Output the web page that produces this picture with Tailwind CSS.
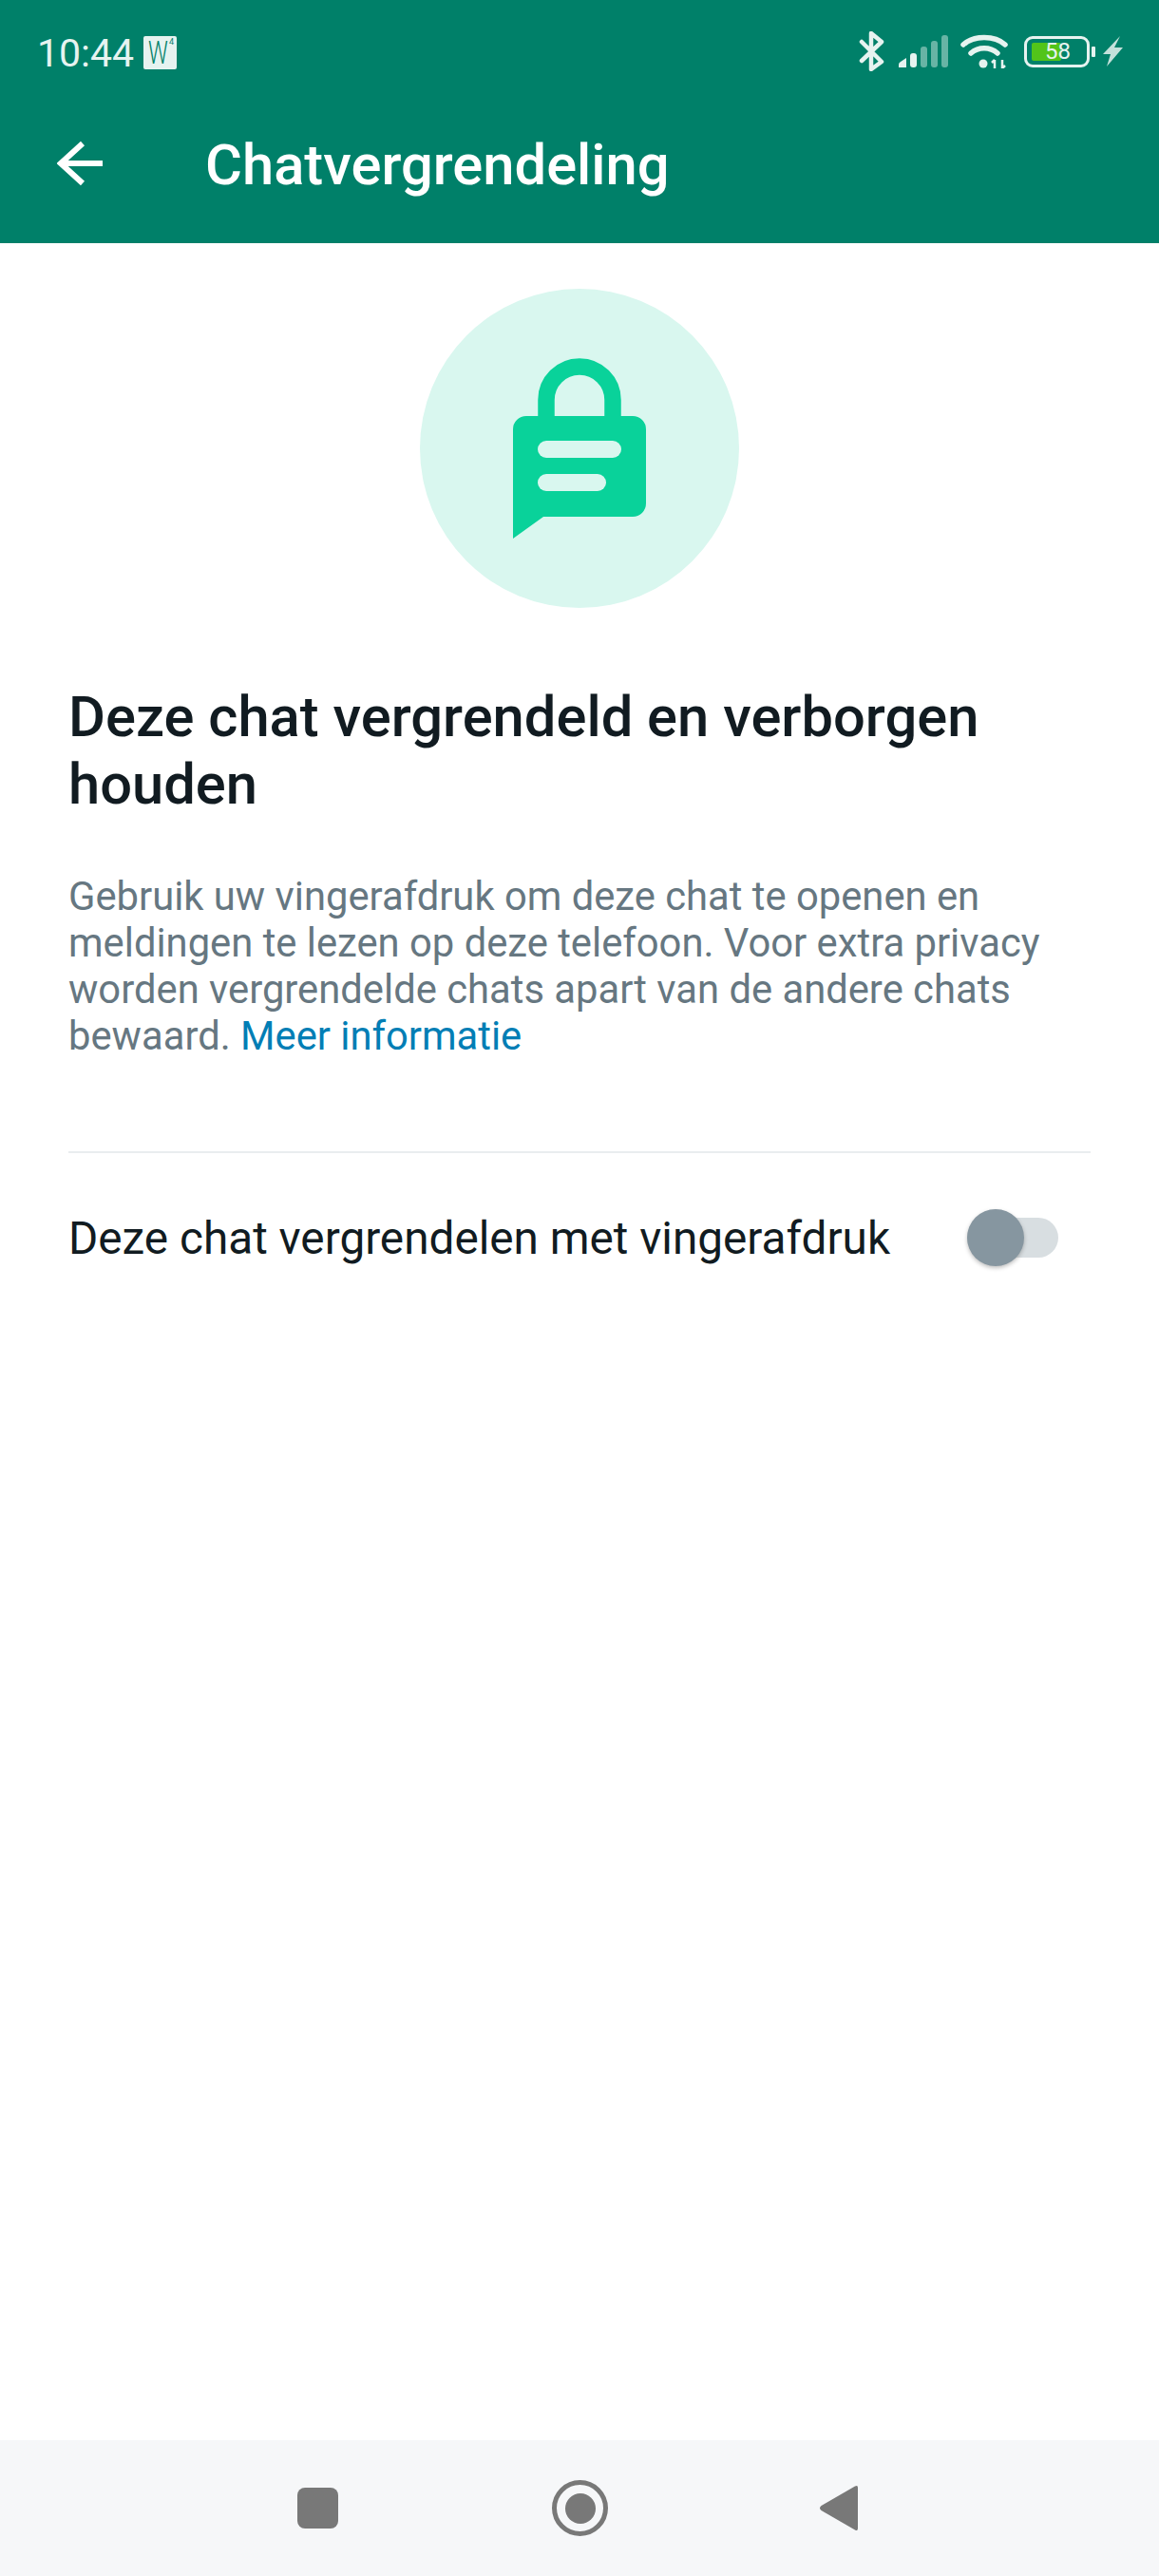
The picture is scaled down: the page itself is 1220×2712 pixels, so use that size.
<!DOCTYPE html>
<html lang="nl">
<head>
<meta charset="UTF-8">
<meta name="viewport" content="width=device-width, initial-scale=1.0">
<title>Chatvergrendeling</title>
<script src="https://cdn.jsdelivr.net/npm/@tailwindcss/browser@4"></script>
</head>
<body class="bg-white font-['Roboto',sans-serif]">
<div class="w-[1220px] h-[2712px] flex flex-col">
  <!-- Header -->
  <header class="h-[256px] bg-[#008069] flex flex-col text-white">
    <!-- Statusbalk -->
    <div class="h-[112px] flex items-start justify-between pl-[39px] pr-[38px] pt-[36px]">
      <div class="flex items-center gap-[10px]">
        <span class="text-[41px] leading-[40px] text-[#e6f3f0]">10:44</span>
        <div class="relative w-[35px] h-[35px] rounded-[2px] bg-[#e6f3f0] -mt-[2px] text-[#008069]">
          <span class="absolute left-[5px] top-[3px] text-[33px] leading-[30px] font-light origin-left scale-x-[0.7]">W</span>
          <span class="absolute right-[3px] top-[2px] text-[9px] leading-[9px]">4</span>
        </div>
      </div>
      <div class="flex items-center h-[42px] -mt-[3px]">
        <svg class="w-[27px] h-[42px]" viewBox="0 0 27 42" fill="none" stroke="#e6f3f0" stroke-width="4.500" stroke-linecap="round" stroke-linejoin="round"><path d="M3 11l21 21-11 8V2l11 9L3 31"/></svg>
        <svg class="w-[52px] h-[34px] ml-[15px]" viewBox="0 0 52 34" fill="#e6f3f0">
          <path d="M0 34v-3q0-2 2-3l6-4v10z"/>
          <rect x="12" y="19" width="7" height="15" rx="3"/>
          <rect x="23" y="12" width="7" height="22" rx="3" opacity=".45"/>
          <rect x="34" y="6" width="7" height="28" rx="3" opacity=".45"/>
          <rect x="45" y="0" width="7" height="34" rx="3" opacity=".45"/>
        </svg>
        <svg class="w-[50px] h-[36px] ml-[13px]" viewBox="0 0 50 36" fill="none" stroke="#e6f3f0" stroke-width="5.500" stroke-linecap="round">
          <path d="M3 11C14 1 36 1 47 11"/>
          <path d="M11 20c8-7 20-7 28 0"/>
          <circle cx="24" cy="31" r="4.500" fill="#e6f3f0" stroke="none"/>
          <path d="M36 36v-9m-3 3l3-3M44 27v9m3-3l-3 3" stroke-width="2.500" stroke-linecap="butt"/>
        </svg>
        <div class="relative ml-[17px] w-[69px] h-[33px] rounded-[9px] border-[3px] border-[#e6f3f0]">
          <div class="absolute left-[5px] top-[4px] w-[31px] h-[19px] rounded-[2px] bg-[#52c41a]"></div>
          <span class="absolute inset-0 flex items-center justify-center text-[24px] leading-[24px] text-[#e6f3f0] pl-[2px]">58</span>
        </div>
        <div class="w-[4px] h-[11px] rounded-[1px] bg-[#e6f3f0] ml-[2px]"></div>
        <svg class="w-[21px] h-[32px] ml-[8px]" viewBox="0 0 21 32" fill="#e6f3f0" opacity=".85"><path d="M18 0L0 19h8L4 32 21 12h-9z"/></svg>
      </div>
    </div>
    <!-- Titelbalk -->
    <div class="flex items-center h-[120px] pl-[60px]">
      <svg class="w-[48px] h-[48px]" viewBox="0 0 48 48" fill="none" stroke="#fff" stroke-width="6"><path d="M48 24H4M27 3L4 24l23 21"/></svg>
      <h1 class="ml-[108px] mt-[3px] text-[59.7px] leading-[64px] font-medium">Chatvergrendeling</h1>
    </div>
  </header>

  <main class="flex-1 flex flex-col pl-[72px] pr-[72px]">
    <div class="flex justify-center pt-[48px]">
      <div class="w-[336px] h-[336px] rounded-full bg-[#d9f7ef] flex items-center justify-center">
        <svg class="w-[140px] h-[190px]" viewBox="0 0 140 190" fill="none">
          <path d="M35 62V44a35 35 0 0 1 70 0v18" stroke="#09d29a" stroke-width="17.5"/>
          <path d="M14 61h112a14 14 0 0 1 14 14v78a14 14 0 0 1-14 14H32L0 190V75a14 14 0 0 1 14-14z" fill="#09d29a"/>
          <rect x="26" y="87" width="88" height="18" rx="9" fill="#d9f7ef"/>
          <rect x="26" y="122" width="72" height="18" rx="9" fill="#d9f7ef"/>
        </svg>
      </div>
    </div>
    <h2 class="mt-[80px] text-[59.7px] leading-[71px] font-medium text-[#111b21]">Deze chat vergrendeld en verborgen houden</h2>
    <p class="mt-[57px] text-[41.75px] leading-[49px] text-[#667781]">Gebruik uw vingerafdruk om deze chat te openen en meldingen te lezen op deze telefoon. Voor extra privacy worden vergrendelde chats apart van de andere chats bewaard. <a href="#" class="text-[#027eb5]">Meer informatie</a></p>
    <div class="mt-[97px] h-[2px] bg-[#e9edef]"></div>
    <div class="flex items-center justify-between h-[180px] pr-[34px]">
      <span class="text-[47.7px] mt-[2px] text-[#111b21]">Deze chat vergrendelen met vingerafdruk</span>
      <div class="relative w-[96px] h-[42px] rounded-full bg-[#d8dee1] -mt-[2px]">
        <div class="absolute left-0 top-[-9px] w-[60px] h-[60px] rounded-full bg-[#8696a0] shadow-[0_2px_4px_rgba(0,0,0,0.25)]"></div>
      </div>
    </div>
  </main>

  <!-- Navigatiebalk -->
  <nav class="h-[143px] bg-[#f6f7f9] relative">
    <div class="absolute left-[313px] top-[50px] w-[43px] h-[43px] rounded-[8px] bg-[#787878]"></div>
    <div class="absolute left-[581px] top-[42px] w-[59px] h-[59px] rounded-full border-[5px] border-[#787878] flex items-center justify-center">
      <div class="w-[32px] h-[32px] rounded-full bg-[#787878]"></div>
    </div>
    <svg class="absolute left-[863px] top-[47px] w-[40px] h-[49px]" viewBox="0 0 40 49"><path d="M37 1.500Q40 0 40 3v43q0 3-3 1.500L1.500 27q-3-2.500 0-5z" fill="#787878"/></svg>
  </nav>
</div>
</body>
</html>
